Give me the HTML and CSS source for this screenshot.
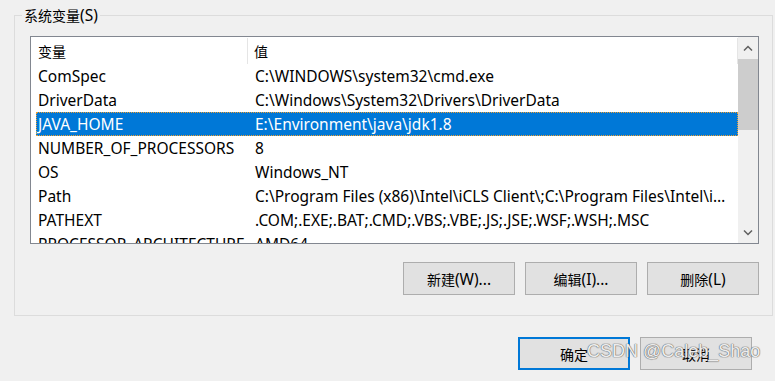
FILE: index.html
```html
<!DOCTYPE html>
<html lang="zh-CN">
<head>
    <meta charset="UTF-8">
    <title>环境变量</title>
    <link rel="stylesheet" href="styles.css">
</head>
<body>
    <div class="dialog">
        <div class="group">
            <span class="group-title"><span class="cjk">系统变量</span>(S)</span>
            <div class="listbox">
                <div class="list">
                    <div class="list-head">
                        <div class="head-name"><span class="cjk">变量</span></div>
                        <div class="head-value"><span class="cjk">值</span></div>
                    </div>
                    <div class="row"><div class="cell-name">ComSpec</div><div class="cell-value">C:\WINDOWS\system32\cmd.exe</div></div>
                    <div class="row"><div class="cell-name">DriverData</div><div class="cell-value">C:\Windows\System32\Drivers\DriverData</div></div>
                    <div class="row selected"><div class="cell-name">JAVA_HOME</div><div class="cell-value">E:\Environment\java\jdk1.8</div></div>
                    <div class="row"><div class="cell-name">NUMBER_OF_PROCESSORS</div><div class="cell-value">8</div></div>
                    <div class="row"><div class="cell-name">OS</div><div class="cell-value">Windows_NT</div></div>
                    <div class="row"><div class="cell-name">Path</div><div class="cell-value">C:\Program Files (x86)\Intel\iCLS Client\;C:\Program Files\Intel\iCLS Client\;C:\WINDOWS\system32</div></div>
                    <div class="row"><div class="cell-name">PATHEXT</div><div class="cell-value">.COM;.EXE;.BAT;.CMD;.VBS;.VBE;.JS;.JSE;.WSF;.WSH;.MSC</div></div>
                    <div class="row"><div class="cell-name">PROCESSOR_ARCHITECTURE</div><div class="cell-value">AMD64</div></div>
                </div>
                <div class="scrollbar">
                    <div class="scroll-btn">
                        <svg width="10" height="6" viewBox="0 0 10 6"><path d="M1 5.5 L5 1.5 L9 5.5" fill="none" stroke="#606060" stroke-width="1.5"/></svg>
                    </div>
                    <div class="scroll-track">
                        <div class="scroll-thumb"></div>
                    </div>
                    <div class="scroll-btn">
                        <svg width="10" height="6" viewBox="0 0 10 6"><path d="M1 0.5 L5 4.5 L9 0.5" fill="none" stroke="#606060" stroke-width="1.5"/></svg>
                    </div>
                </div>
            </div>
            <div class="group-actions">
                <button class="btn"><span class="cjk">新建</span>(W)...</button>
                <button class="btn"><span class="cjk">编辑</span>(I)...</button>
                <button class="btn"><span class="cjk">删除</span>(L)</button>
            </div>
        </div>
        <div class="dialog-actions">
            <button class="btn primary"><span class="cjk">确定</span></button>
            <button class="btn"><span class="cjk">取消</span></button>
        </div>
    </div>
    <div class="watermark">CSDN @Caleb_Shao</div>
</body>
</html>
```

FILE: styles.css
```css
body {
    margin: 0;
    background-color: #f0f0f0;
    font-family: "Noto Sans", "Noto Sans CJK SC", sans-serif;
    font-size: 15.5px;
    color: #000;
    width: 775px;
    height: 381px;
    overflow: hidden;
    position: relative;
}

/* 中文字略小一点 */
.cjk {
    font-size: 14px;
}

.dialog {
    padding-top: 15px;
}

/* 分组框 */
.group {
    position: relative;
    margin: 0 2px 0 14px;
    height: 301px;
    box-sizing: border-box;
    border: 1px solid #dcdcdc;
    padding: 20px 13px 0 15px;
}

.group-title {
    position: absolute;
    top: -10px;
    left: 7px;
    padding: 0 2px;
    background-color: #f0f0f0;
    line-height: 18px;
}

.listbox {
    display: flex;
    height: 208px;
    box-sizing: border-box;
    border: 1px solid #828790;
    background-color: white;
}

.list {
    flex: 1;
    overflow: hidden;
}

.list-head {
    display: flex;
    height: 27px;
    align-items: stretch;
}

.head-name {
    width: 217px;
    padding-left: 7px;
    box-sizing: border-box;
    border-right: 1px solid #e5e5e5;
    line-height: 26px;
    margin-top: 1px;
}

.head-value {
    flex: 1;
    padding-left: 6px;
    line-height: 26px;
    margin-top: 1px;
    border-right: 1px solid #e5e5e5;
}

.row {
    display: flex;
    height: 24px;
    line-height: 24px;
    margin-left: 5px;
    white-space: nowrap;
}

.cell-name {
    width: 212px;
    flex-shrink: 0;
    padding-left: 2px;
    box-sizing: border-box;
    overflow: hidden;
}

.cell-value {
    flex: 1;
    padding: 0 12px 0 7px;
    overflow: hidden;
    text-overflow: ellipsis;
}

.row.selected {
    background-color: #0078d7;
    color: white;
    outline: 1px dotted #f0a030;
    outline-offset: -1px;
}

/* 滚动条 */
.scrollbar {
    width: 20px;
    display: flex;
    flex-direction: column;
    background-color: #f0f0f0;
}

.scroll-btn {
    height: 21px;
    display: flex;
    align-items: center;
    justify-content: center;
}

.scroll-track {
    flex: 1;
}

.scroll-thumb {
    height: 71px;
    margin-top: 1px;
    background-color: #cdcdcd;
}

.btn {
    width: 112px;
    height: 33px;
    border: 1px solid #adadad;
    background-color: #e1e1e1;
    font-family: "Noto Sans", "Noto Sans CJK SC", sans-serif;
    font-size: 15.5px;
    color: #000;
    padding: 0;
}

.btn.primary {
    border: 2px solid #0078d7;
}

.group-actions {
    display: flex;
    justify-content: flex-end;
    gap: 10px;
    margin-top: 18px;
}

.dialog-actions {
    display: flex;
    justify-content: flex-end;
    gap: 10px;
    margin: 21px 23px 0 0;
}

.watermark {
    position: absolute;
    left: 587px;
    top: 341px;
    font-family: "Liberation Sans", Arial, sans-serif;
    font-size: 18px;
    color: rgba(255, 255, 255, 0.9);
    text-shadow: 0 0 1px #6e6e6e, 0 0 1px #6e6e6e, 0 0 1px #6e6e6e;
}
```
